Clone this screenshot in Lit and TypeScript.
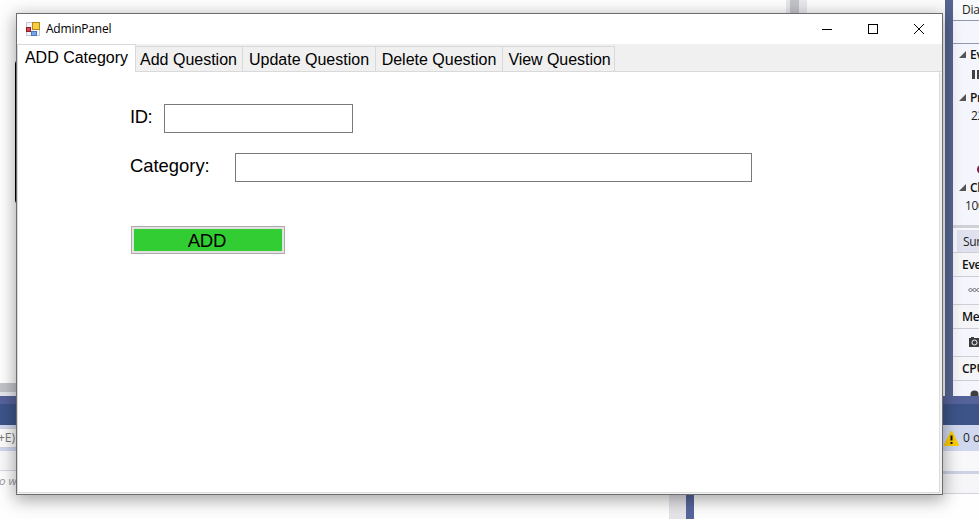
import { LitElement, html, css, svg } from "lit";
import { customElement } from "lit/decorators.js";
import { classMap } from "lit/directives/class-map.js";

const TABS = [
  { label: "ADD Category", cls: "t1" },
  { label: "Add Question", cls: "t2" },
  { label: "Update Question", cls: "t3" },
  { label: "Delete Question", cls: "t4" },
  { label: "View Question", cls: "t5" },
];

@customElement("ide-backdrop")
class IdeBackdrop extends LitElement {
  static styles = css`
    :host { display: flex; flex-direction: column; height: 519px; background: #fefefe;
      font: 12px/16px "Open Sans", "Noto Sans", sans-serif; color: #1e1e1e; }
    .upper { display: flex; height: 396px; flex: none; }
    .editor { width: 786px; display: flex; flex-direction: column; justify-content: flex-end; }
    .box { width: 30px; height: 146px; margin: 0 0 178px 15px; border: 2px solid #000; border-radius: 5px; box-sizing: border-box; }
    .hscroll { height: 9px; background: #c2c3c9; border-bottom: 4px solid #e6e6ec; }
    .vscroll { width: 21px; background: linear-gradient(90deg, #e8e8ec 4px, #c2c3c9 4px 13px, #e8e8ec 13px); }
    .mid { width: 138px; background: #fcfcfd; }
    .split { width: 8px; background: #56648f; }
    .pane { width: 26px; background: #f5f6fd; overflow: hidden; white-space: nowrap; }
    .pane > div { box-sizing: border-box; display: flex; align-items: center; padding-left: 9px; letter-spacing: -0.3px; }
    .p1 { height: 21px; border-bottom: 1px solid #9299ad; background: #f8f9fd; }
    .p2 { height: 23px; border-bottom: 1px solid #9299ad; }
    .pane > .grp { height: 21px; padding-left: 6px; gap: 4px; font-weight: 600; color: #111; }
    .pane > .r1 { height: 22px; padding: 0 0 4px 19px; }
    .pane > .r2 { height: 69px; padding-left: 18px; align-items: flex-start; position: relative; }
    .pin { position: absolute; left: 24px; top: 57px; width: 9px; height: 9px; border-radius: 50%; background: #8d1740; }
    .pane > .r3 { height: 27px; padding-left: 12px; align-items: flex-start; }
    .gap { height: 5px; background: #cfd1d9; border-bottom: 2px solid #f8f8fb; }
    .sur { height: 22px; background: #dfe1ef; border-left: 4px solid #f6f7fd; }
    .pane > .sur { padding: 2px 0 0 6px; }
    .hd { height: 25px; font-weight: 600; color: #111; border-top: 1px solid #cdcfd8; border-bottom: 1px solid #cdcfd8; background: #f5f5f8; }
    .ic { height: 27px; }
    .pane > .ic { padding: 0 0 2px 15px; }
    .pane > .last { height: 16px; padding-left: 17px; align-items: flex-end; }
    svg { flex: none; display: block; }
    .band1 { height: 8px; background: #56629a; flex: none; }
    .band2 { height: 21px; background: #3d5489; flex: none; }
    .tools { height: 26px; flex: none; background: #cfd8ee; display: flex; justify-content: space-between; align-items: center; }
    .search { box-sizing: border-box; width: 30px; height: 20px; margin-left: -3px; line-height: 18px; border: 1px solid #d2d4de; background: #fcfcfc; color: #777; white-space: nowrap; }
    .errs { width: 35px; display: flex; align-items: center; gap: 4px; white-space: nowrap; overflow: hidden; }
    .list { height: 43px; flex: none; display: flex; justify-content: space-between; }
    .ll { width: 200px; }
    .l1 { height: 19px; border-bottom: 1px solid #d6dae8; background: #f9f9fb; }
    .l2 { font-style: italic; font-size: 11.5px; margin-left: -1px; color: #999; line-height: 19px; }
    .lr { width: 200px; }
    .r4 { height: 20px; background: #f8f8fa; border-bottom: 3px solid #cdd3e5; }
    .r5 { height: 19px; background: #f6f6f8; border-bottom: 1px solid #cfd3df; }
    .foot { flex: 1; display: flex; padding-left: 669px; }
    .f1 { width: 17px; background: #e5e4e9; }
    .f2 { width: 8px; background: #56659c; }
  `;
  tri() {
    return html`<svg width="7" height="7">${svg`<path d="M7 0V7H0Z" fill="#555"/>`}</svg>`;
  }
  render() {
    return html`
      <div class="upper">
        <div class="editor"><div class="box"></div><div class="hscroll"></div></div>
        <div class="vscroll"></div>
        <div class="mid"></div>
        <div class="split"></div>
        <div class="pane">
          <div class="p1">Dia</div>
          <div class="p2"></div>
          <div class="grp">${this.tri()}Ev</div>
          <div class="r1"><svg width="10" height="9"><path d="M0 0H3V9H0ZM5 0H8V9H5Z" fill="#424242"/></svg></div>
          <div class="grp">${this.tri()}Pr</div>
          <div class="r2">22<span class="pin"></span></div>
          <div class="grp">${this.tri()}Cl</div>
          <div class="r3">100</div>
          <div class="gap"></div>
          <div class="sur">Sum</div>
          <div class="hd">Eve</div>
          <div class="ic"><svg width="14" height="8" fill="none" stroke="#666"><path d="M2.5 2L4.5 4L2.5 6L.5 4Z M6.5 2L8.5 4L6.5 6L4.5 4Z M10.5 2L12.5 4L10.5 6L8.5 4Z"/></svg></div>
          <div class="hd">Me</div>
          <div class="ic"><svg width="14" height="10"><path d="M1 1H3V0H6V1H13V10H1Z" fill="#3c3c3c"/><circle cx="6.5" cy="5.5" r="2.5" fill="none" stroke="#f5f6fd"/></svg></div>
          <div class="hd">CPU</div>
          <div class="last"><svg width="9" height="7"><circle cx="4.5" cy="4.5" r="4" fill="#3f3f3f"/></svg></div>
        </div>
      </div>
      <div class="band1"></div>
      <div class="band2"></div>
      <div class="tools">
        <div class="search">+E)</div>
        <div class="errs">
          <svg width="15" height="15"><path d="M7.5 1L14 14H1Z" fill="#fc0" stroke="#fc0" stroke-width="2" stroke-linejoin="round"/><path d="M6.5 4.5H8.5V9.5H6.5ZM6.5 11H8.5V13H6.5Z" fill="#111"/></svg>
          <span>0 of</span>
        </div>
      </div>
      <div class="list">
        <div class="ll"><div class="l1"></div><div class="l2">o w</div></div>
        <div class="lr"><div class="r4"></div><div class="r5"></div></div>
      </div>
      <div class="foot"><div class="f1"></div><div class="f2"></div></div>
    `;
  }
}

@customElement("admin-window")
class AdminWindow extends LitElement {
  static styles = css`
    :host { display: flex; flex-direction: column; box-sizing: border-box; width: 927px; height: 482px;
      border: 1px solid #6b6d70; background: #fff; box-shadow: 0 4px 16px 1px rgba(0, 0, 0, 0.36);
      font-family: "Liberation Sans", Arial, sans-serif; color: #000; }
    .title { height: 30px; flex: none; display: flex; align-items: center; padding-left: 9px; }
    .name { flex: 1; margin-left: 6px; font: 12px/16px "Open Sans", "Noto Sans", sans-serif; letter-spacing: -0.22px; }
    .ctl { width: 46px; height: 30px; display: flex; align-items: center; justify-content: center; }
    .ctl svg { margin-top: -1px; }
    svg { display: block; }
    .strip { height: 28px; flex: none; background: #f0f0f0; display: flex; align-items: flex-end; }
    .tab { box-sizing: border-box; height: 26px; border: solid #d9d9d9; border-width: 1px 1px 1px 0;
      font-size: 16px; line-height: 25px; text-align: center; white-space: nowrap; }
    .tab.active { height: 28px; background: #fff; border-bottom: 0; border-left: 1px solid #d9d9d9; line-height: 26px; }
    .t1 { width: 119px; }
    .t2 { width: 107px; text-indent: -1px; }
    .t3 { width: 133px; }
    .t4 { width: 127px; }
    .t5 { width: 112px; text-indent: 2px; letter-spacing: -0.05px; }
    .rest { flex: 1; height: 1px; background: #d9d9d9; }
    .page { flex: 1; box-sizing: border-box; margin: 0 2px 1px 0; border: solid #dcdcdc; border-width: 0 1px 1px 1px; padding: 32px 0 0 112px; font-size: 18.4px;
      box-shadow: 2px 1px 0 #f0f0f0; }
    .row { display: flex; align-items: flex-start; height: 49px; line-height: 25px; }
    .field { box-sizing: border-box; height: 29px; border: 1px solid #7a7a7a; background: #fff; }
    .id { width: 34px; letter-spacing: -0.4px; }
    .cat { width: 105px; }
    .f-id { width: 189px; }
    .f-cat { width: 517px; }
    .add { display: block; box-sizing: border-box; width: 154px; height: 28px; margin: 24px 0 0 1px; padding: 2px 0 0;
      border: 1px solid #adadad; box-shadow: inset 0 0 0 2px #e1e1e1; background: #32cd32; border-radius: 0;
      font: 18.6px/24px "Liberation Sans", Arial, sans-serif; color: #000; text-align: center; text-indent: -2px; letter-spacing: -0.2px; }
  `;
  render() {
    return html`
      <div class="title">
        <svg width="14" height="14">
          <rect x=".5" y=".5" width="13" height="13" fill="#f3f5f8" stroke="#c5cbd4"/>
          <rect x="6.5" y=".5" width="7" height="7" fill="#f8cb45" stroke="#b78712"/>
          <rect x=".5" y="5.5" width="4" height="4" fill="#d7444b" stroke="#8e1c25"/>
          <rect x="5.5" y="9.5" width="5" height="4" fill="#78a6ec" stroke="#4b76bf"/>
        </svg>
        <span class="name">AdminPanel</span>
        <span class="ctl"><svg width="10" height="10"><path d="M0 5.5H10" stroke="#000"/></svg></span>
        <span class="ctl"><svg width="10" height="10"><rect x=".5" y=".5" width="9" height="9" fill="none" stroke="#000"/></svg></span>
        <span class="ctl"><svg width="10" height="10"><path d="M0 0L10 10M10 0L0 10" stroke="#000"/></svg></span>
      </div>
      <div class="strip">
        ${TABS.map((t, i) => html`<div class=${classMap({ tab: true, [t.cls]: true, active: i === 0 })}>${t.label}</div>`)}
        <div class="rest"></div>
      </div>
      <div class="page">
        <div class="row"><label class="id">ID:</label><div class="field f-id"></div></div>
        <div class="row"><label class="cat">Category:</label><div class="field f-cat"></div></div>
        <button class="add">ADD</button>
      </div>
    `;
  }
}

@customElement("app-root")
class AppRoot extends LitElement {
  static styles = css`
    :host { display: block; position: relative; width: 979px; height: 519px; overflow: hidden; }
    admin-window { position: absolute; left: 16px; top: 13px; }
  `;
  render() {
    return html`<ide-backdrop></ide-backdrop><admin-window></admin-window>`;
  }
}
